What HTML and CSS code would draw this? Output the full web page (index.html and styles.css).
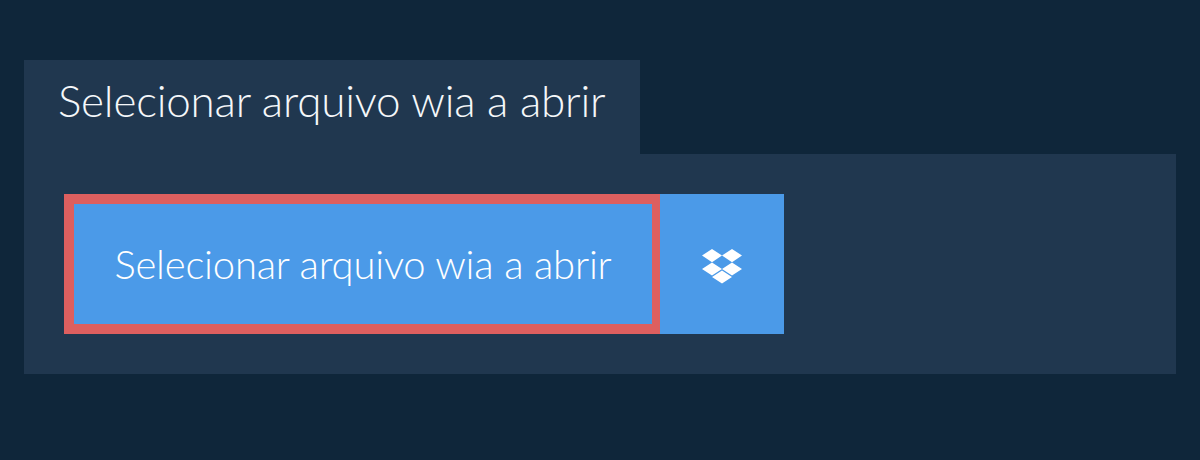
FILE: index.html
```html
<!DOCTYPE html>
<html lang="pt">
<head>
    <meta charset="UTF-8">
    <title>Selecionar arquivo wia a abrir</title>
    <link rel="stylesheet" href="styles.css">
</head>
<body>
    <div class="tab">Selecionar arquivo wia a abrir</div>
    <div class="panel">
        <button class="btn-select">Selecionar arquivo wia a abrir</button>
        <button class="btn-dropbox" aria-label="Dropbox">
            <svg width="40" height="35" viewBox="0 0 40 35"><path fill="#fff" d="M10 0 20 6.6 10 13.2 0 6.6zM30 0 40 6.6 30 13.2 20 6.6zM0 20 10 13.4 20 20 10 26.6zM30 13.4 40 20 30 26.6 20 20zM10 28 20 21.4 30 28 20 34.6z"/></svg>
        </button>
    </div>
</body>
</html>
```

FILE: styles.css
```css
* {
    margin: 0;
    padding: 0;
    box-sizing: border-box;
}

body {
    background: #0f263a;
    min-height: 460px;
    padding: 60px 24px 0;
    font-family: Lato, sans-serif;
    overflow: hidden;
}

.tab {
    width: 616px;
    height: 94px;
    padding-left: 34px;
    background: #20374f;
    color: #f5f7fa;
    font-size: 44px;
    font-weight: 300;
    letter-spacing: -0.2px;
    line-height: 80px;
}

.panel {
    display: flex;
    height: 220px;
    padding: 40px;
    background: #20374f;
}

button {
    border: none;
    color: #fff;
    background: #4b9ae8;
    font-family: inherit;
}

.btn-select {
    width: 596px;
    height: 140px;
    border: 10px solid #dd5f5f;
    border-right-width: 8px;
    font-size: 40px;
    font-weight: 300;
    letter-spacing: -0.2px;
}

.btn-dropbox {
    display: flex;
    align-items: center;
    justify-content: center;
    width: 124px;
    height: 140px;
    padding-top: 4px;
}
```
